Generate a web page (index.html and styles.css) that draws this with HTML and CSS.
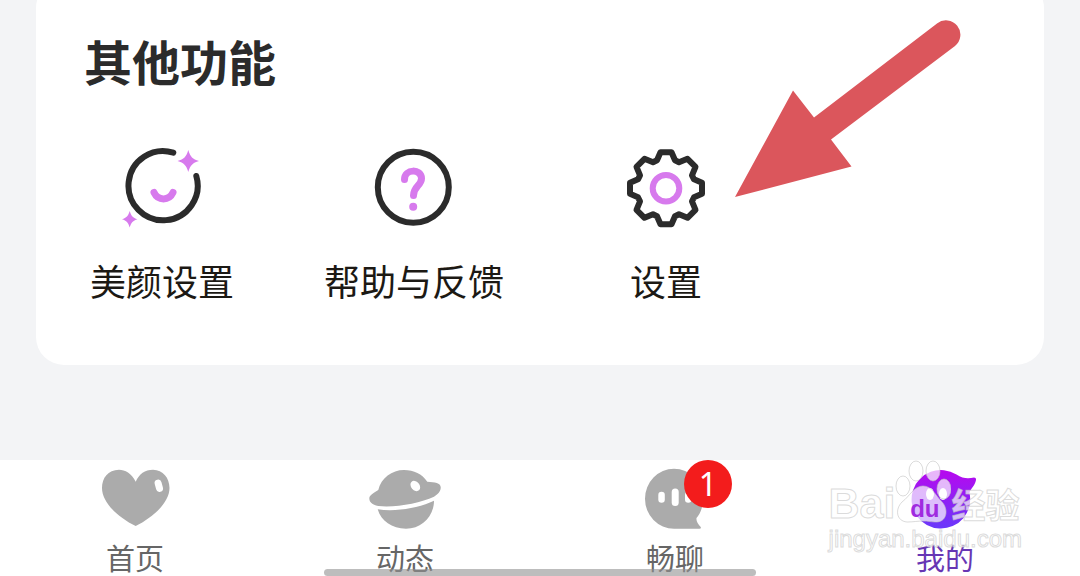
FILE: index.html
```html
<!DOCTYPE html>
<html lang="zh-CN">
<head>
<meta charset="utf-8">
<meta name="viewport" content="width=device-width, initial-scale=1">
<title>我的</title>
<link rel="stylesheet" href="styles.css">
</head>
<body>
<main class="content">
  <section class="card">
    <h2 class="card-title">其他功能</h2>
    <div class="tools">
      <a class="tool" href="#beauty">
        <svg class="tool-icon" viewBox="0 0 84 84" aria-hidden="true">
          <path class="line" d="M53.3 7.6A34.6 34.6 0 1 0 76.3 31"/>
          <path class="accent-line" d="M34 47.5C38 56 49 56 53 47.5"/>
          <path class="accent-fill" d="M68.3 5C70.500 12 72.500 14 79 16C72.500 18 70.500 20 68.300 27C66.100 20 64.100 18 57.500 16C64.100 14 66.100 12 68.300 5ZM9.700 66C11.300 71 12.800 72.700 17.500 74.300C12.800 75.900 11.300 77.500 9.700 82.500C8.100 77.500 6.600 75.900 2 74.300C6.600 72.700 8.100 71 9.700 66Z"/>
        </svg>
        <span>美颜设置</span>
      </a>
      <a class="tool" href="#help">
        <svg class="tool-icon" viewBox="0 0 84 84" aria-hidden="true">
          <circle class="line" cx="41.300" cy="42.300" r="35.500"/>
          <path class="accent-line" d="M32.500 34.500C32.500 23.500 49.500 23.500 49.500 33.500C49.500 40.500 41.500 41 41.500 50.500"/>
          <circle class="accent-fill" cx="41.200" cy="61.700" r="4"/>
        </svg>
        <span>帮助与反馈</span>
      </a>
      <a class="tool" href="#settings">
        <svg class="tool-icon" viewBox="0 0 84 84" aria-hidden="true">
          <g transform="translate(42 43.300)">
            <path class="line" d="M-5.500-36H5.500L9-28L13-26L21.500-29.500L29.500-21.500L26-13L28-9L36-5.500V5.500L28 9L26 13L29.500 21.500L21.500 29.500L13 26L9 28L5.500 36H-5.500L-9 28L-13 26L-21.500 29.500L-29.500 21.500L-26 13L-28 9L-36 5.500V-5.500L-28-9L-26-13L-29.500-21.500L-21.500-29.500L-13-26L-9-28Z"/>
            <circle class="accent-line ring" r="13.300"/>
          </g>
        </svg>
        <span>设置</span>
      </a>
    </div>
  </section>
</main>

<nav class="tabbar">
  <a class="tab" href="#home">
    <svg class="tab-icon" viewBox="0 0 80 64" aria-hidden="true">
      <path d="M40.700 15.700C36.500 7 30 3.700 24 3.700C13 3.700 7 12 7 22C7 37 24 52 40.700 60C57 52 74.500 37 74.500 22C74.500 12 68 3.700 58 3.700C50 3.700 44 8 40.700 15.700Z"/>
      <rect class="shine" x="60.300" y="13.500" width="7" height="12.500" rx="3.500" transform="rotate(-15 63.700 19.700)"/>
    </svg>
    <span>首页</span>
  </a>
  <a class="tab" href="#feed">
    <svg class="tab-icon" viewBox="0 0 80 64" aria-hidden="true">
      <path d="M13.300 24C16 12 27 4 39 4C49 4 57 8 62.300 15.700C70 16 75.500 17 75.700 21C76 25 73 28.500 69 30.700C55 37 30 42 13.300 40C7 39 4.300 36 4.300 32.300C4.500 29 9 27 13.300 24ZM12.700 43.300C31 46 54 42 69 34.700C69 50 57 62.700 41 62.700C27 62.700 16 55 12.700 43.300Z"/>
      <ellipse class="shine" cx="50.300" cy="20" rx="5.700" ry="4.200" transform="rotate(50 50.300 20)"/>
    </svg>
    <span>动态</span>
  </a>
  <a class="tab" href="#chat">
    <span class="icon-wrap">
      <svg class="tab-icon" viewBox="0 0 80 64" aria-hidden="true">
        <path d="M39 2.700A29 29 0 0 1 68 32C68 42 65 48 61.500 52C61 55 63 58 65.700 61Q66.500 62.700 64.500 62.700H39A29 30 0 0 1 39 2.700Z"/>
        <rect class="shine" x="23.300" y="25.700" width="6.500" height="11" rx="3.200"/>
        <rect class="shine" x="36.700" y="22.500" width="7" height="17.500" rx="3.500"/>
        <rect class="shine" x="50" y="25.700" width="6.500" height="11" rx="3.200"/>
      </svg>
      <span class="badge">1</span>
    </span>
    <span>畅聊</span>
  </a>
  <a class="tab active" href="#me" aria-current="page">
    <svg class="tab-icon" viewBox="0 0 80 64" aria-hidden="true">
      <defs>
        <linearGradient id="me-fill" x1="0" y1="0" x2="0" y2="1">
          <stop offset="0" stop-color="#b808ee"/>
          <stop offset="1" stop-color="#6938fb"/>
        </linearGradient>
      </defs>
      <path fill="url(#me-fill)" d="M51.500 8.500C58 13 64 12.500 69 11.500Q71.500 11.500 71 14C70 20 65 23 64.500 27A29.300 29.300 0 1 1 51.500 8.500Z"/>
      <ellipse class="shine" cx="25" cy="28" rx="4" ry="6"/>
      <ellipse class="shine" cx="38" cy="28" rx="4" ry="6"/>
    </svg>
    <span>我的</span>
  </a>
  <span class="home-bar"></span>
</nav>

<svg class="arrow" viewBox="0 0 226 178" aria-hidden="true">
  <path d="M0 177L58 70.500L79 97.500L202 3.500A14.200 14.200 0 0 1 220 26L96 119.500L116.500 146.500Z"/>
</svg>

<div class="watermark">
  <div class="mark-row">
    <span class="mark-latin">Bai</span>
    <span class="paw">
      <svg viewBox="0 0 56 64" aria-hidden="true">
        <ellipse cx="8" cy="26" rx="7" ry="10"/>
        <ellipse cx="21" cy="11" rx="7" ry="10"/>
        <ellipse cx="38" cy="11" rx="7" ry="10"/>
        <ellipse cx="49" cy="29" rx="7" ry="10"/>
        <path d="M28 26C37 26 40 35 47 42C53 48 53 61 42 62C36 62 33 61 28 61C23 61 18 62 12 62C1 61 0 49 7 42C15 36 19 26 28 26Z"/>
      </svg>
      <span class="paw-text">du</span>
    </span>
    <span class="mark-cjk">经验</span>
  </div>
  <div class="mark-url">jingyan.baidu.com</div>
</div>
</body>
</html>
```
FILE: styles.css
```css
* {
  box-sizing: border-box;
}

body {
  position: relative;
  display: flex;
  flex-direction: column;
  min-height: 100vh;
  margin: 0;
  overflow: hidden;
  background: #f3f4f6;
  font-family: "Noto Sans CJK SC", sans-serif;
}

a {
  color: inherit;
  text-decoration: none;
}

.content {
  flex: 1;
  padding: 0 36px;
}

.card {
  margin-top: -20px;
  padding: 48px 0 59px;
  border-radius: 28px;
  background: #fff;
}

.card-title {
  margin: 0;
  padding-left: 48px;
  color: #2b2b2b;
  font-size: 48px;
  font-weight: 700;
  line-height: 64px;
}

.tools {
  display: grid;
  grid-template-columns: repeat(4, 1fr);
  padding-top: 53px;
}

.tool {
  display: flex;
  flex-direction: column;
  align-items: center;
  gap: 25px;
  color: #1c1914;
  font-size: 36px;
  line-height: 52px;
}

.tool-icon {
  width: 84px;
  height: 84px;
}

.line {
  fill: none;
  stroke: #2b2b2b;
  stroke-width: 6;
  stroke-linecap: round;
  stroke-linejoin: round;
}

.accent-line {
  fill: none;
  stroke: #d77aed;
  stroke-width: 7;
  stroke-linecap: round;
}

.ring {
  stroke-width: 6;
}

.accent-fill {
  fill: #d77aed;
}

.tabbar {
  position: relative;
  display: grid;
  grid-template-columns: repeat(4, 1fr);
  padding: 6px 0 1px;
  background: #fff;
}

.tab {
  display: flex;
  flex-direction: column;
  align-items: center;
  gap: 9px;
  color: #666;
  font-size: 29px;
  line-height: 36px;
}

.tab-icon {
  display: block;
  width: 80px;
  height: 64px;
  fill: #ababab;
}

.shine {
  fill: #fff;
}

.active {
  color: #6736b4;
}

.icon-wrap {
  position: relative;
}

.badge {
  position: absolute;
  top: -6px;
  left: 49px;
  width: 48px;
  height: 48px;
  border-radius: 50%;
  background: #f31c1c;
  color: #fff;
  font-family: "Noto Sans", sans-serif;
  font-size: 32px;
  line-height: 48px;
  text-align: center;
}

.home-bar {
  position: absolute;
  bottom: 0;
  left: 30%;
  width: 40%;
  height: 7px;
  border-radius: 4px;
  background: rgba(145, 145, 145, 0.6);
}

.arrow {
  position: absolute;
  top: 20px;
  left: 735px;
  width: 226px;
  height: 178px;
  fill: #db565c;
}

.watermark {
  position: absolute;
  right: 58px;
  bottom: 22px;
  color: rgba(255, 255, 255, 0.7);
  font-family: "Liberation Sans", sans-serif;
  -webkit-text-stroke: 1px rgba(195, 195, 195, 0.6);
  pointer-events: none;
}

.mark-row {
  display: flex;
  align-items: flex-end;
  height: 64px;
  font-weight: 700;
}

.mark-latin {
  font-size: 43px;
  line-height: 42px;
}

.paw {
  position: relative;
  width: 56px;
  height: 64px;
}

.paw svg {
  display: block;
  width: 56px;
  height: 64px;
  fill: rgba(255, 255, 255, 0.7);
  stroke: rgba(195, 195, 195, 0.6);
}

.paw-text {
  position: absolute;
  right: 12px;
  bottom: 3px;
  color: #a02be0;
  font-size: 24px;
  line-height: 24px;
  -webkit-text-stroke: 0;
}

.mark-cjk {
  font-family: "Noto Sans CJK SC", sans-serif;
  font-size: 34px;
  line-height: 40px;
}

.mark-url {
  font-size: 24px;
  line-height: 30px;
}
```
